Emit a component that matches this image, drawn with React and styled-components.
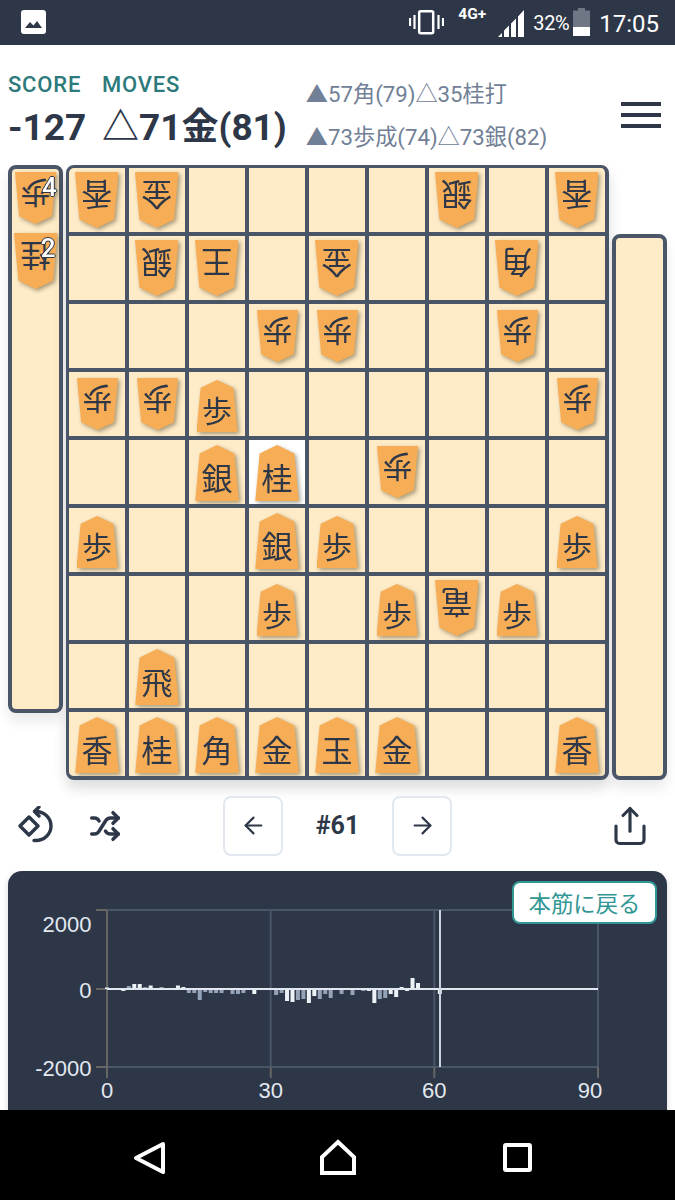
import React from "react";
import styled, { createGlobalStyle } from "styled-components";
import { ArrowLeft, ArrowRight, Share, Shuffle } from "lucide-react";

const Global = createGlobalStyle`
  html, body { margin: 0; padding: 0; background: #fff; }
  body { font-family: Roboto, "Noto Sans CJK JP", sans-serif; }
`;

const Page = styled.div`
  width: 675px; height: 1200px; display: flex; flex-direction: column; overflow: hidden; background: #fff;
`;

/* status bar */
const StatusBar = styled.div`
  height: 45px; flex: none; background: #2d3748; color: #fff; display: flex; align-items: flex-start;
  padding: 0 16px 0 21px; box-sizing: border-box;
`;
const StatusLeft = styled.svg`margin-top: 10px; flex: none;`;
const StatusRight = styled.div`margin-left: auto; display: flex; align-items: flex-start;`;
const Vibrate = styled.svg`margin-top: 9px; flex: none;`;
const Network = styled.span`font: 700 15.5px/15px Roboto, sans-serif; margin: 7px 0 0 14px; width: 33px;`;
const Signal = styled.svg`margin: 10px 0 0 7px; flex: none;`;
const Percent = styled.span`font: 400 20px/24px Roboto, sans-serif; margin: 11px 0 0 9px; width: 33px; letter-spacing: -.3px;`;
const Battery = styled.svg`margin: 8px 0 0 7px; flex: none;`;
const Clock = styled.span`font: 400 24px/28px Roboto, sans-serif; margin: 10px 0 0 9px;`;

/* header */
const Header = styled.header`
  height: 120px; flex: none; box-sizing: border-box; padding: 28px 14px 0 8px; display: flex; align-items: flex-start;
`;
const Summary = styled.div`
  display: grid; grid-template-columns: 94px auto; grid-template-rows: 24px 50px; row-gap: 6px;
`;
const Label = styled.div`font-weight: 500; font-size: 22px; line-height: 24px; color: #2c7a7b; letter-spacing: .8px;`;
const Value = styled.div`font-weight: 700; font-size: 37px; line-height: 50px; color: #2d3748; white-space: nowrap;`;
const Branches = styled.div`
  margin-left: 19px; margin-top: 0; display: flex; flex-direction: column; color: #718096; font-size: 22.2px; line-height: 43px; white-space: nowrap;
`;
const Menu = styled.div`
  margin-left: auto; margin-top: 29px; width: 40px; display: flex; flex-direction: column; gap: 7px;
`;
const MenuLine = styled.span`display: block; height: 4px; background: #2d3748;`;

/* board */
const BoardArea = styled.div`
  flex: none; display: flex; gap: 3px; padding: 0 8px; height: 615px;
`;
const Hand = styled.div`
  width: 55px; box-sizing: border-box; border: 4px solid #4a5568; border-radius: 8px; background: #feebc8;
  height: ${p => p.$h}px; align-self: ${p => p.$end ? "flex-end" : "flex-start"};
  display: flex; flex-direction: column; align-items: center; gap: 9px; padding-top: 3px;
  box-shadow: 0 8px 14px rgba(0,0,0,.09);
`;
const Board = styled.div`
  display: grid; grid-template-columns: repeat(9, 56px); grid-template-rows: repeat(9, 64px); gap: 4px;
  background: #4a5568; border: solid #4a5568; border-width: 3px 4px 4px 3px; border-radius: 8px; overflow: hidden;
  box-shadow: 0 8px 14px rgba(0,0,0,.14);
`;
const Cell = styled.div`
  background: ${p => p.$active ? "#fff" : "#feebc8"}; display: flex; align-items: center; justify-content: center;
`;
const PieceWrap = styled.div`
  position: relative; flex: none; filter: drop-shadow(2px 2px 2px rgba(60,50,20,.45));
  width: ${p => p.$small ? 41 : 43.5}px; height: ${p => p.$small ? 52 : 56}px;
  margin-top: ${p => p.$flip ? 0 : (p.$small ? 4 : 2)}px;
`;
const PieceFace = styled.div`
  width: 100%; height: 100%; background: #f6ad55; color: #2d3748;
  clip-path: polygon(50% 0, 90% 15%, 100% 100%, 0 100%, 10% 15%);
  display: flex; align-items: center; justify-content: center; padding-top: 6px; box-sizing: border-box;
  font: 400 ${p => p.$small ? 30 : 31}px/1 "Noto Sans CJK JP", sans-serif;
  transform: ${p => p.$flip ? "rotate(180deg)" : "none"};
`;
const Badge = styled.span`
  position: absolute; left: 27px; top: 2px; color: #fff; font: 500 26px/26px Roboto, sans-serif;
  text-shadow: -1px 0 #2d3748, 1px 0 #2d3748, 0 -1px #2d3748, 0 1px #2d3748;
`;

/* controls */
const Controls = styled.div`
  flex: none; height: 91px; display: grid; grid-template-columns: 1fr auto 1fr; align-items: center; padding: 0 20px; color: #2d3748;
`;
const ControlLeft = styled.div`display: flex; align-items: center; gap: 33px; margin-left: -2px;`;
const ControlCenter = styled.div`display: flex; align-items: center;`;
const ControlRight = styled.div`display: flex; justify-content: flex-end; padding-right: 4px;`;
const StepButton = styled.div`
  width: 60px; height: 60px; box-sizing: border-box; border: 2px solid #e2e8f0; border-radius: 8px;
  display: flex; align-items: center; justify-content: center; background: #fff;
`;
const MoveNo = styled.div`width: 109px; text-align: center; font-weight: 700; font-size: 25px; color: #2d3748;`;

/* chart */
const ChartPanel = styled.div`
  position: relative; margin: 0 8px; flex: none; height: 300px; background: #2d3748; border-radius: 14px;
  box-shadow: 0 2px 6px rgba(0,0,0,.15);
`;
const Main = styled.main`flex: 1; min-height: 0; overflow: hidden;`;
const BackButton = styled.div`
  position: absolute; right: 10px; top: 10px; width: 145px; height: 43px; box-sizing: border-box; background: #fff;
  border: 2px solid #319795; border-radius: 8px; color: #319795; display: flex; align-items: center; justify-content: center;
  font: 400 22.4px/1 "Noto Sans CJK JP", sans-serif;
`;
const ChartText = styled.text`font: 400 22px "Liberation Sans", sans-serif; fill: #e2e8f0;`;
const ChartSvg = styled.svg`display: block;`;

/* nav */
const NavBar = styled.nav`
  flex: none; height: 90px; background: #000; display: flex; align-items: center; padding: 6px 0 0 130px; box-sizing: border-box;
  svg:nth-child(2) { margin: 0 140px 0 148px; }
`;

const S = (k) => ({ k });
const R = (k) => ({ k, flip: true });
const rows = [
  [R("香"), R("金"), 0, 0, 0, 0, R("銀"), 0, R("香")],
  [0, R("銀"), R("王"), 0, R("金"), 0, 0, R("角"), 0],
  [0, 0, 0, R("歩"), R("歩"), 0, 0, R("歩"), 0],
  [R("歩"), R("歩"), S("歩"), 0, 0, 0, 0, 0, R("歩")],
  [0, 0, S("銀"), S("桂"), 0, R("歩"), 0, 0, 0],
  [S("歩"), 0, 0, S("銀"), S("歩"), 0, 0, 0, S("歩")],
  [0, 0, 0, S("歩"), 0, S("歩"), R("竜"), S("歩"), 0],
  [0, S("飛"), 0, 0, 0, 0, 0, 0, 0],
  [S("香"), S("桂"), S("角"), S("金"), S("玉"), S("金"), 0, 0, S("香")],
];

const bars = {
  0: 1.5, 3: -2, 4: 3, 5: 5, 6: 5, 7: 1.5, 8: 3.5, 9: 1, 10: 2, 12: 1, 13: 3.5, 14: 2,
  15: -4, 16: -4, 17: -11, 18: -3, 19: -4, 20: -4, 21: -4, 22: 1, 23: -5, 24: -5, 25: -4, 27: -5, 28: -1, 29: 1,
  31: -6, 32: -4, 33: -12, 34: -13, 35: -11, 36: -10, 37: -14, 38: -7, 39: -10, 40: -5, 41: -9, 43: -5, 45: -6,
  47: -2, 48: -2, 49: -14, 50: -10, 51: -9, 52: -5, 53: -8, 54: 2, 55: -2, 56: 11, 57: 6, 60: -1, 61: -5,
};
const whiteBars = new Set([0, 3, 5, 6, 7, 8, 13, 14, 27, 33, 34, 37, 38, 48, 49, 52, 53, 54, 55, 56, 57, 61]);

function Piece({ k, flip, children }) {
  const small = k === "歩";
  return (
    <PieceWrap $small={small} $flip={flip}>
      <PieceFace $small={small} $flip={flip}>{k}</PieceFace>
      {children}
    </PieceWrap>
  );
}

function Chart() {
  const x0 = 99, y0 = 118;
  const px = (i) => x0 + i * 5.456;
  return (
    <ChartSvg width="659" height="239" viewBox="0 0 659 239">
      <g stroke="#4a5568" strokeWidth="2">
        <line x1={x0} x2={590} y1={39} y2={39} />
        <line x1={x0} x2={590} y1={196} y2={196} />
        <line x1={262.7} x2={262.7} y1={39} y2={196} />
        <line x1={426.3} x2={426.3} y1={39} y2={196} />
        <line x1={590} x2={590} y1={39} y2={196} />
      </g>
      <g stroke="#666" strokeWidth="2">
        <line x1={x0} x2={x0} y1={39} y2={207} />
        <line x1={262.7} x2={262.7} y1={196} y2={207} />
        <line x1={426.3} x2={426.3} y1={196} y2={207} />
        <line x1={590} x2={590} y1={196} y2={207} />
        <line x1={88} x2={x0} y1={39} y2={39} />
        <line x1={88} x2={x0} y1={118} y2={118} />
        <line x1={88} x2={x0} y1={196} y2={196} />
      </g>
      {Object.entries(bars).map(([i, v]) => (
        <rect key={i} x={px(+i) - 2} width="4" y={v > 0 ? y0 - v : y0} height={Math.abs(v)}
          fill={whiteBars.has(+i) ? "#edf2f7" : "#94a3b8"} />
      ))}
      <line x1={x0} x2={590} y1={y0} y2={y0} stroke="#e2e8f0" strokeWidth="2" />
      <line x1={432} x2={432} y1={39} y2={196} stroke="#cbd5e0" strokeWidth="2" />
      <ChartText x="83.500" y="61" textAnchor="end">2000</ChartText>
      <ChartText x="83.500" y="127" textAnchor="end">0</ChartText>
      <ChartText x="83.500" y="205" textAnchor="end">-2000</ChartText>
      <ChartText x="99" y="227" textAnchor="middle">0</ChartText>
      <ChartText x="262.7" y="227" textAnchor="middle">30</ChartText>
      <ChartText x="426.3" y="227" textAnchor="middle">60</ChartText>
      <ChartText x="582" y="227" textAnchor="middle">90</ChartText>
    </ChartSvg>
  );
}

export default function App() {
  return (
    <Page>
      <Global />
      <StatusBar>
        <StatusLeft width="25" height="24" viewBox="0 0 25 24">
          <rect width="25" height="24" rx="3" fill="#fff" />
          <path d="M4 18l5-6 3.500 3.500 3.500-4.500 5 7z" fill="#2d3748" />
        </StatusLeft>
        <StatusRight>
          <Vibrate width="35" height="27" viewBox="0 0 35 27">
            <rect x="10.2" y="2.2" width="14" height="22" rx="1.5" fill="none" stroke="#fff" strokeWidth="2.5" />
            <path d="M1 9v8M5.500 6v14M29.500 6v14M34 9v8" stroke="#fff" strokeWidth="2.2" fill="none" />
          </Vibrate>
          <Network>4G+</Network>
          <Signal width="26" height="27" viewBox="0 0 26 27">
            <path d="M0 27l4-4v4zM6 27v-6.500l5-5V27zM13 27V13.500l5-5V27zM20 27V6.500L26 0v27z" fill="#fff" />
          </Signal>
          <Percent>32%</Percent>
          <Battery width="17" height="28" viewBox="0 0 17 28">
            <path d="M5 0h7v2.500h5V19H0V2.500h5z" fill="#6f7785" />
            <rect y="19" width="17" height="9" fill="#fff" />
          </Battery>
          <Clock>17:05</Clock>
        </StatusRight>
      </StatusBar>

      <Header>
        <Summary>
          <Label>SCORE</Label>
          <Label>MOVES</Label>
          <Value>-127</Value>
          <Value>△71金(81)</Value>
        </Summary>
        <Branches>
          <span>▲57角(79)△35桂打</span>
          <span>▲73歩成(74)△73銀(82)</span>
        </Branches>
        <Menu>
          <MenuLine />
          <MenuLine />
          <MenuLine />
        </Menu>
      </Header>

      <BoardArea>
        <Hand $h={548}>
          <Piece k="歩" flip><Badge>4</Badge></Piece>
          <Piece k="桂" flip><Badge>2</Badge></Piece>
        </Hand>
        <Board>
          {rows.flatMap((row, y) =>
            row.map((p, x) => (
              <Cell key={`${x}-${y}`} $active={x === 3 && y === 4}>
                {p ? <Piece k={p.k} flip={p.flip} /> : null}
              </Cell>
            ))
          )}
        </Board>
        <Hand $h={546} $end />
      </BoardArea>

      <Controls>
        <ControlLeft>
          <svg width="38" height="40" viewBox="0 0 38 40" fill="none" stroke="#2d3748" strokeWidth="3.4" strokeLinejoin="round" strokeLinecap="round">
            <path d="M11 11l9 9-9 9-9-9z" />
            <path d="M17 5.500h1a15 14.500 0 0 1 0 29h-2" />
            <path d="M21 1l-4.500 4.500 4.500 4.500" />
          </svg>
          <Shuffle size={32} strokeWidth={2.6} color="#2d3748" />
        </ControlLeft>
        <ControlCenter>
          <StepButton><ArrowLeft size={27} strokeWidth={1.9} color="#2d3748" /></StepButton>
          <MoveNo>#61</MoveNo>
          <StepButton><ArrowRight size={27} strokeWidth={1.9} color="#2d3748" /></StepButton>
        </ControlCenter>
        <ControlRight>
          <Share size={42} strokeWidth={1.8} color="#2d3748" />
        </ControlRight>
      </Controls>

      <Main>
        <ChartPanel>
          <Chart />
          <BackButton>本筋に戻る</BackButton>
        </ChartPanel>
      </Main>

      <NavBar>
        <svg width="40" height="40" viewBox="0 0 40 40" fill="none" stroke="#fff" strokeWidth="4" strokeLinejoin="round">
          <path d="M33 6L6 20l27 14z" />
        </svg>
        <svg width="40" height="40" viewBox="0 0 40 40" fill="none" stroke="#fff" strokeWidth="4" strokeLinejoin="miter">
          <path d="M20 4l16 15v16H4V19z" />
        </svg>
        <svg width="40" height="40" viewBox="0 0 40 40" fill="none" stroke="#fff" strokeWidth="4" strokeLinejoin="round">
          <rect x="7" y="7" width="25" height="25" rx="1" />
        </svg>
      </NavBar>
    </Page>
  );
}
